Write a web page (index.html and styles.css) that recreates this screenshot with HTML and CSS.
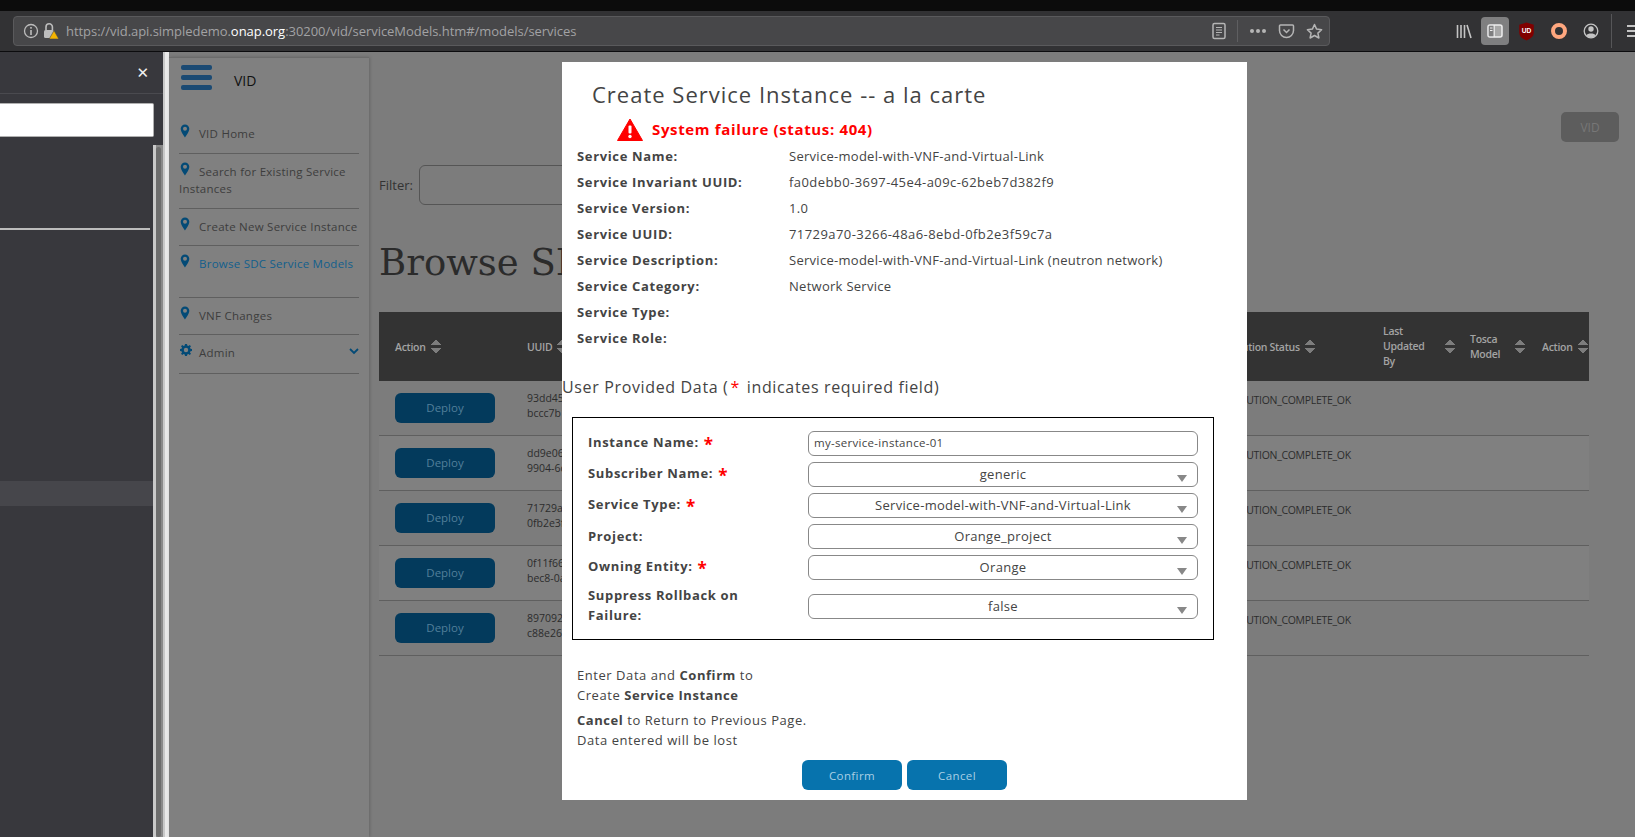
FILE: index.html
```html
<!DOCTYPE html>
<html lang="en">
<head>
  <meta charset="UTF-8" />
  <title>VID - Browse SDC Service Models</title>
  <link rel="stylesheet" href="styles.css">
</head>
<body>
  <div class="topstrip"></div>
  <div class="toolbar">
    <div class="urlbar">
      <svg class="ic-info" width="16" height="16" viewBox="0 0 16 16"><circle cx="8" cy="8" r="6.5" fill="none" stroke="#bdbdbd" stroke-width="1.3"/><rect x="7.2" y="7" width="1.6" height="5" fill="#bdbdbd"/><rect x="7.2" y="4" width="1.6" height="1.7" fill="#bdbdbd"/></svg>
      <svg class="ic-lock" width="16" height="18" viewBox="0 0 16 18"><path d="M3 8V5a3.2 3.2 0 0 1 6.4 0v3" fill="none" stroke="#bdbdbd" stroke-width="1.6"/><rect x="1" y="8" width="10" height="8" rx="1.5" fill="#bdbdbd"/><path d="M11 8.5l4.8 8.5H6.2z" fill="#f5b400" stroke="#474749" stroke-width=".6"/></svg>
      <span class="url">https://vid.api.simpledemo.<b>onap.org</b>:30200/vid/serviceModels.htm#/models/services</span>
      <svg class="ic-reader" width="16" height="18" viewBox="0 0 16 18"><rect x="2" y="1.5" width="12" height="15" rx="1.5" fill="none" stroke="#b5b5b5" stroke-width="1.5"/><path d="M5 5.5h6M5 8h6M5 10.5h6M5 13h3.5" stroke="#b5b5b5" stroke-width="1"/></svg>
      <span class="urlsep"></span>
      <span class="dots"><i></i><i></i><i></i></span>
      <svg class="ic-pocket" width="17" height="16" viewBox="0 0 17 16"><path d="M2.5 2h12a1 1 0 0 1 1 1v4.500a7 7 0 0 1-14 0V3a1 1 0 0 1 1-1z" fill="none" stroke="#b5b5b5" stroke-width="1.5"/><path d="M5.500 6.500l3 3 3-3" fill="none" stroke="#b5b5b5" stroke-width="1.5"/></svg>
      <svg class="ic-star" width="17" height="17" viewBox="0 0 17 17"><path d="M8.500 1.500l2.100 4.600 5 .6-3.700 3.400 1 4.900-4.400-2.500-4.400 2.500 1-4.900L1.400 6.700l5-.6z" fill="none" stroke="#b5b5b5" stroke-width="1.5" stroke-linejoin="round"/></svg>
    </div>
    <div class="tools">
      <svg class="ic-library" width="16" height="15" viewBox="0 0 16 15"><path d="M1.500 1v13M5 1v13M8.500 1v13M11 1l4 13" stroke="#c4c4c4" stroke-width="1.600" fill="none"/></svg>
      <span class="sidebtn"><svg width="16" height="14" viewBox="0 0 16 14"><rect x="1" y="1" width="14" height="12" rx="2" fill="#a8a8a8" stroke="#eee" stroke-width="1.500"/><rect x="1.800" y="1.800" width="5" height="10.400" fill="#7f7f80"/><path d="M7.200 1v12" stroke="#eee" stroke-width="1.200"/><path d="M3 4h2.500M3 6.500h2.500" stroke="#eee" stroke-width="1"/></svg></span>
      <svg class="ic-ublock" width="17" height="19" viewBox="0 0 15 17"><path d="M7.500 .5l6.500 2v7c0 3.500-3 5.800-6.500 7C4 15.300 1 13 1 9.500v-7z" fill="#800000"/><text x="7.500" y="9.800" class="ub">UD</text></svg>
      <span class="ring"></span>
      <svg class="ic-account" width="16" height="16" viewBox="0 0 16 16"><circle cx="8" cy="8" r="6.800" fill="none" stroke="#c4c4c4" stroke-width="1.300"/><circle cx="8" cy="6" r="2.700" fill="#c4c4c4"/><path d="M3.500 12.500c.6-2.600 8.400-2.600 9 0a6.300 6.300 0 0 1-9 0z" fill="#c4c4c4"/></svg>
      <span class="toolsep"></span>
      <span class="burger"><i></i><i></i><i></i></span>
    </div>
  </div>

  <div class="main">
    <div class="bookmarks">
      <div class="bm-head"><span class="bm-close">&#10005;</span></div>
      <div class="bm-search"><div class="bm-input"></div></div>
      <div class="bm-body">
        <div class="bm-tree">
          <div class="bm-rule"></div>
          <div class="bm-active"></div>
        </div>
        <div class="bm-scroll"><div class="bm-thumb"></div></div>
      </div>
    </div>
    <div class="splitter"></div>

    <div class="page">
      <nav class="leftnav">
        <div class="nav-head">
          <span class="hamburger"><i></i><i></i><i></i></span>
          <span class="nav-title">VID</span>
        </div>
        <ul class="menu">
          <li class="roomy"><svg class="pin" viewBox="0 0 10 14"><path d="M5 .5a4.300 4.300 0 0 1 4.300 4.300C9.300 8 5 13.500 5 13.500S.7 8 .7 4.800A4.300 4.300 0 0 1 5 .5zm0 2.300a2 2 0 1 0 0 4 2 2 0 0 0 0-4z" fill-rule="evenodd"/></svg>VID Home</li>
          <li class="roomy"><svg class="pin" viewBox="0 0 10 14"><path d="M5 .5a4.300 4.300 0 0 1 4.300 4.300C9.300 8 5 13.500 5 13.500S.7 8 .7 4.800A4.300 4.300 0 0 1 5 .5zm0 2.300a2 2 0 1 0 0 4 2 2 0 0 0 0-4z" fill-rule="evenodd"/></svg>Search for Existing Service Instances</li>
          <li><svg class="pin" viewBox="0 0 10 14"><path d="M5 .5a4.300 4.300 0 0 1 4.300 4.300C9.300 8 5 13.500 5 13.500S.7 8 .7 4.800A4.300 4.300 0 0 1 5 .5zm0 2.300a2 2 0 1 0 0 4 2 2 0 0 0 0-4z" fill-rule="evenodd"/></svg>Create New Service Instance</li>
          <li class="current"><svg class="pin" viewBox="0 0 10 14"><path d="M5 .5a4.300 4.300 0 0 1 4.300 4.300C9.300 8 5 13.500 5 13.500S.7 8 .7 4.800A4.300 4.300 0 0 1 5 .5zm0 2.300a2 2 0 1 0 0 4 2 2 0 0 0 0-4z" fill-rule="evenodd"/></svg>Browse SDC Service Models</li>
          <li><svg class="pin" viewBox="0 0 10 14"><path d="M5 .5a4.300 4.300 0 0 1 4.300 4.300C9.300 8 5 13.500 5 13.500S.7 8 .7 4.800A4.300 4.300 0 0 1 5 .5zm0 2.300a2 2 0 1 0 0 4 2 2 0 0 0 0-4z" fill-rule="evenodd"/></svg>VNF Changes</li>
          <li class="admin"><svg class="gear" viewBox="0 0 12 12"><path d="M5 0h2l.3 1.500 1.100.5L9.700 1l1.300 1.300-1 1.300.5 1.100L12 5v2l-1.500.3-.5 1.100 1 1.300L9.700 11l-1.300-1-1.100.5L7 12H5l-.3-1.500-1.100-.5-1.300 1L1 9.700l1-1.300-.5-1.100L0 7V5l1.500-.3.500-1.100-1-1.300L2.300 1l1.300 1 1.100-.5zM6 3.800a2.200 2.200 0 1 0 0 4.400 2.200 2.200 0 0 0 0-4.400z" fill-rule="evenodd"/></svg>Admin<svg class="chev" viewBox="0 0 10 7"><path d="M1 1l4 4 4-4" fill="none" stroke-width="1.800"/></svg></li>
        </ul>
      </nav>

      <div class="content">
        <div class="topright"><button class="vid-btn">VID</button></div>
        <div class="filter"><label>Filter:</label><div class="filter-input"></div></div>
        <h1>Browse SD</h1>
        <div class="tbl">
          <div class="tr th">
            <div>Action<span class="sort"></span></div>
            <div>UUID<span class="sort"></span></div>
            <div></div>
            <div>Distribution Status<span class="sort"></span></div>
            <div class="wrap last"><span>Last<br>Updated<br>By</span><span class="sort"></span></div>
            <div class="wrap tosca"><span>Tosca<br>Model</span><span class="sort"></span></div>
            <div>Action<span class="sort"></span></div>
          </div>
          <div class="tr"><div><button class="deploy">Deploy</button></div><div class="uuid">93dd457<br>bccc7b1</div><div></div><div>DISTRIBUTION_COMPLETE_OK</div><div></div><div></div><div></div></div>
          <div class="tr alt"><div><button class="deploy">Deploy</button></div><div class="uuid">dd9e061<br>9904-6c</div><div></div><div>DISTRIBUTION_COMPLETE_OK</div><div></div><div></div><div></div></div>
          <div class="tr"><div><button class="deploy">Deploy</button></div><div class="uuid">71729a7<br>0fb2e3f</div><div></div><div>DISTRIBUTION_COMPLETE_OK</div><div></div><div></div><div></div></div>
          <div class="tr alt"><div><button class="deploy">Deploy</button></div><div class="uuid">0f11f66<br>bec8-0a</div><div></div><div>DISTRIBUTION_COMPLETE_OK</div><div></div><div></div><div></div></div>
          <div class="tr"><div><button class="deploy">Deploy</button></div><div class="uuid">8970921<br>c88e261</div><div></div><div>DISTRIBUTION_COMPLETE_OK</div><div></div><div></div><div></div></div>
        </div>
      </div>

      <div class="modal">
        <h2>Create Service Instance -- a la carte</h2>
        <div class="error">
          <svg width="26" height="23" viewBox="0 0 26 23"><path d="M13 1L25.500 22.500H.5z" fill="#f00" stroke="#f00" stroke-linejoin="round"/><rect x="11.500" y="7.500" width="3" height="8" rx="1" fill="#fff"/><circle cx="13" cy="18.500" r="1.700" fill="#fff"/></svg>
          <span>System failure (status: 404)</span>
        </div>
        <dl class="info">
          <dt>Service Name:</dt><dd>Service-model-with-VNF-and-Virtual-Link</dd>
          <dt>Service Invariant UUID:</dt><dd class="idval">fa0debb0-3697-45e4-a09c-62beb7d382f9</dd>
          <dt>Service Version:</dt><dd>1.0</dd>
          <dt>Service UUID:</dt><dd class="idval">71729a70-3266-48a6-8ebd-0fb2e3f59c7a</dd>
          <dt>Service Description:</dt><dd>Service-model-with-VNF-and-Virtual-Link (neutron network)</dd>
          <dt>Service Category:</dt><dd>Network Service</dd>
          <dt>Service Type:</dt><dd></dd>
          <dt>Service Role:</dt><dd></dd>
        </dl>
        <div class="userdata">User Provided Data (<span class="req-small">*</span> indicates required field)</div>
        <div class="formbox">
          <div class="frow"><label>Instance Name: <em>*</em></label><div class="field text">my-service-instance-01</div></div>
          <div class="frow"><label>Subscriber Name: <em>*</em></label><div class="field">generic</div></div>
          <div class="frow"><label>Service Type: <em>*</em></label><div class="field">Service-model-with-VNF-and-Virtual-Link</div></div>
          <div class="frow"><label>Project:</label><div class="field">Orange_project</div></div>
          <div class="frow"><label>Owning Entity: <em>*</em></label><div class="field">Orange</div></div>
          <div class="frow tall"><label>Suppress Rollback on Failure:</label><div class="field">false</div></div>
        </div>
        <div class="hints">
          <p>Enter Data and <b>Confirm</b> to<br>Create <b>Service Instance</b></p>
          <p><b>Cancel</b> to Return to Previous Page.<br>Data entered will be lost</p>
        </div>
        <div class="actions">
          <button>Confirm</button>
          <button>Cancel</button>
        </div>
      </div>
    </div>
  </div>
</body>
</html>
```

FILE: styles.css
```css
* { box-sizing: border-box; }
html, body { height: 100%; }
body {
  margin: 0;
  height: 837px;
  overflow: hidden;
  display: flex; flex-direction: column;
  font-family: "Open Sans", "Noto Sans", sans-serif;
  background: #7c7c7c;
}

/* browser chrome */
.topstrip { height: 11px; background: #0c0c0c; flex: none; }
.toolbar {
  height: 41px; flex: none;
  background: #323234;
  border-bottom: 1px solid #0c0c0e;
  display: flex; align-items: center;
  padding-left: 13px;
}
.urlbar {
  width: 1317px; height: 30px; flex: none;
  background: #474749;
  border: 1px solid #5a5a5c; border-radius: 4px;
  display: flex; align-items: center;
  padding-left: 9px; padding-right: 6px;
}
.ic-lock { margin-left: 4px; }
.url {
  margin-left: 7px; flex: 1;
  font-size: 13px; letter-spacing: -.04px;
  color: #a2a2a4;
}
.url b { font-weight: 400; color: #fff; }
.urlsep { width: 1px; height: 22px; background: #5f5f61; margin: 0 12px 0 10px; }
.dots { display: flex; gap: 2px; margin-right: 12px; }
.dots i { width: 4px; height: 4px; border-radius: 50%; background: #b5b5b5; }
.ic-star { margin-left: 11px; }
.tools { flex: 1; display: flex; align-items: center; padding-left: 126px; }
.sidebtn {
  width: 28px; height: 28px; margin-left: 9px;
  background: #7f7f80; border-radius: 4px;
  display: flex; align-items: center; justify-content: center;
}
.ic-ublock { margin-left: 9px; margin-right: -1px; }
.ub { font: bold 6px "Liberation Sans", sans-serif; fill: #fff; text-anchor: middle; }
.ring {
  width: 16px; height: 16px; margin-left: 17px;
  border: 4px solid #ffa77f; border-radius: 50%;
}
.ic-account { margin-left: 16px; }
.toolsep { width: 1px; height: 34px; background: #565658; margin-left: 12px; }
.burger { display: flex; flex-direction: column; gap: 3px; margin-left: 15px; width: 12px; overflow: hidden; }
.burger i { height: 2px; width: 16px; background: #c4c4c4; }

/* firefox sidebar */
.main { flex: 1; display: flex; min-height: 0; }
.bookmarks {
  width: 163px; flex: none;
  background: #38383d;
  display: flex; flex-direction: column;
}
.bm-head {
  height: 42px; flex: none;
  border-bottom: 1px solid #4a4a4f;
  display: flex; align-items: center; justify-content: flex-end;
  padding-right: 14px;
}
.bm-close { color: #f0f0f0; font-size: 15px; font-family: "DejaVu Sans", sans-serif; }
.bm-search { padding: 9px 9px 8px 0; flex: none; }
.bm-input { height: 34px; background: #fff; border: 1px solid #b0b0b0; border-left: 0; border-radius: 0 2px 2px 0; }
.bm-body { flex: 1; display: flex; min-height: 0; }
.bm-tree { flex: 1; }
.bm-rule { height: 2px; background: #bcbcbc; margin: 83px 3px 0 0; }
.bm-active { height: 25px; background: #46464b; margin-top: 251px; margin-right: -2px; }
.bm-scroll { width: 10px; background: #8a8a8a; border-left: 3px solid #c9c9c9; padding-top: 2px; }
.bm-thumb { width: 5px; height: 100%; background: #6d6d6d; border-radius: 3px; }
.splitter { width: 6px; flex: none; background: #e9e9e9; border-left: 2px solid #c8c8c8; }

/* page behind the dialog */
.page { flex: 1; position: relative; display: flex; min-width: 0; background: #7c7c7c; }
.leftnav {
  width: 200px; flex: none;
  margin-top: 5px;
  background: #808080;
  border-top: 1px solid #6c6c6c;
  box-shadow: 1px 0 3px rgba(0,0,0,.18);
  padding: 0 10px;
  color: #3d3d3d;
}
.nav-head { display: flex; height: 58px; padding: 7px 0 0 2px; }
.hamburger { display: flex; flex-direction: column; gap: 5px; width: 31px; height: 25px; }
.hamburger i { height: 5px; border-radius: 2px; background: #1b4a73; }
.nav-title { margin: 6px 0 0 22px; font-size: 14px; color: #111; font-family: "Open Sans", sans-serif; }
.menu { list-style: none; margin: 0; padding: 0; font-size: 11.500px; letter-spacing: .25px; }
.menu li {
  position: relative;
  border-bottom: 1px solid #5f5f5f;
  padding: 9px 0 10px;
  line-height: 17px;
  text-indent: 20px;
}
.menu li.roomy { padding-bottom: 11px; }
.menu li.admin { padding-bottom: 12px; }
.menu li.current { color: #125f8d; height: 52px; }
.pin { position: absolute; left: 1px; top: 8px; width: 10px; height: 14px; fill: #034a76; }
.gear { position: absolute; left: 1px; top: 9px; width: 12px; height: 12px; fill: #034a76; }
.chev { position: absolute; right: 0; top: 13px; width: 10px; height: 7px; stroke: #034a76; }

.content { flex: 1; min-width: 0; padding: 0 46px 0 10px; }
.topright { display: flex; justify-content: flex-end; padding: 60px 0 0; height: 113px; margin-right: -30px; }
.vid-btn {
  width: 58px; height: 30px;
  background: #5d5d5d; color: #777;
  border: none; border-radius: 5px;
  font: 12px "Open Sans", sans-serif;
}
.filter { display: flex; align-items: center; height: 40px; font-size: 13px; color: #333; }
.filter-input { width: 400px; height: 40px; margin-left: 6px; border: 1px solid #555; border-radius: 6px; }
h1 {
  margin: 36px 0 0;
  font: 400 37px/44px "DejaVu Serif", "Liberation Serif", serif;
  color: #2b2b2b;
  white-space: nowrap;
}
.tbl { margin-top: 27px; font-size: 10.500px; letter-spacing: -.3px; color: #2c2c2c; width: 1210px; }
.tr {
  display: grid;
  grid-template-columns: 132px 200px 483px 173px 87px 72px 47px;
  height: 55px;
  border-bottom: 1px solid #5f5f5f;
  padding-left: 16px;
}
.tr.alt { background: #808080; }
.tr > div { padding-top: 12px; white-space: nowrap; }
.tr .uuid { line-height: 15px; padding-top: 10px; letter-spacing: 0; }
.th {
  height: 69px;
  background: #333;
  border: none;
  color: #a3a3a3;
  align-items: center;
  font-weight: 600;
}
.th > div { padding-top: 0; display: flex; align-items: center; gap: 5px; }
.th .wrap { line-height: 15px; justify-content: space-between; }
.th .last { width: 72px; }
.th .tosca { width: 55px; }
.sort {
  flex: none; display: inline-block;
  width: 10px; height: 15px;
  background:
    linear-gradient(135deg, transparent 50%, #7d7d7d 50%) 0 0 / 5px 6px no-repeat,
    linear-gradient(225deg, transparent 50%, #7d7d7d 50%) 5px 0 / 5px 6px no-repeat,
    linear-gradient(45deg, transparent 50%, #7d7d7d 50%) 0 9px / 5px 6px no-repeat,
    linear-gradient(315deg, transparent 50%, #7d7d7d 50%) 5px 9px / 5px 6px no-repeat;
}
.deploy {
  width: 100px; height: 30px; padding: 0 0 2px;
  background: #033a5c; color: #527f9a;
  border: none; border-radius: 6px;
  font: 11.500px "Open Sans", sans-serif;
}

/* dialog */
.modal {
  position: absolute; left: 393px; top: 10px;
  width: 685px; height: 738px;
  background: #fff;
  color: #444;
  font-size: 13px; letter-spacing: .55px;
}
.modal h2 { margin: 0; padding: 19px 0 0 30px; font-size: 22px; line-height: 26px; font-weight: 400; color: #444; letter-spacing: 1px; }
.error { display: flex; align-items: center; gap: 9px; height: 24px; margin: 10px 0 0 55px; color: #f00; font-weight: 700; font-size: 15px; letter-spacing: .65px; }
.info {
  margin: 2px 0 0 15px;
  display: grid;
  grid-template-columns: 212px 1fr;
  grid-auto-rows: 26px;
  line-height: 26px;
}
.info dt { font-weight: 700; letter-spacing: .65px; }
.info dd { margin: 0; letter-spacing: .28px; }
.info dd.idval { letter-spacing: .43px; }
.userdata { font-size: 16px; line-height: 22px; margin-top: 25px; letter-spacing: .65px; }
.req-small { color: #f00; margin: 0 2px; }
.formbox {
  width: 642px; height: 223px;
  margin: 19px 0 0 10px;
  border: 1px solid #000;
  padding: 13px 15px 0;
}
.frow { display: flex; height: 25px; margin-bottom: 6px; align-items: center; }
.frow.tall { height: 40px; margin-bottom: 0; }
.frow label { width: 220px; padding-right: 30px; margin-top: -2px; font-weight: 700; letter-spacing: .65px; line-height: 20px; }
.frow em { color: #f00; font-style: normal; font-size: 17px; vertical-align: -4px; margin-left: 1px; line-height: 1; }
.field {
  position: relative;
  width: 390px; height: 25px; flex: none;
  border: 1px solid #888; border-radius: 6px;
  text-align: center;
  line-height: 23px; font-size: 13px; letter-spacing: .3px;
}
.field::after {
  content: ""; position: absolute; right: 10px; top: 12px;
  border: 5px solid transparent; border-top: 7px solid #888; border-bottom: 0;
}
.field.text { text-align: left; padding-left: 5px; font-size: 11.500px; letter-spacing: .3px; line-height: 21px; }
.field.text::after { display: none; }
.hints { margin: 25px 0 0 15px; line-height: 20px; }
.hints p { margin: 0 0 5px; }
.actions { display: flex; gap: 5px; padding-left: 240px; margin-top: 10px; }
.actions button {
  width: 100px; height: 30px;
  background: #0773ad; color: #a9cfe4;
  border: none; border-radius: 6px;
  font: 11.500px "Open Sans", sans-serif; letter-spacing: .4px;
}
```
